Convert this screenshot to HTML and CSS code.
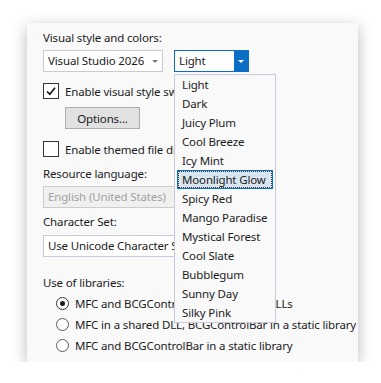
FILE: index.html
```html
<!DOCTYPE html>
<html lang="en">
<head>
  <meta charset="UTF-8">
  <title>Project Wizard - Appearance</title>
  <link rel="stylesheet" href="styles.css">
</head>

<body>
  <div class="window">

    <!-- Visual style -->
    <div class="label">Visual style and colors:</div>
    <div class="combo-row">
      <div class="combo combo-style">
        <span>Visual Studio 2026</span>
        <span class="arrow"></span>
      </div>
      <div class="combo-wrap">
        <div class="combo combo-theme">
          <span>Light</span>
          <span class="drop-btn"><span class="arrow arrow-white"></span></span>
        </div>
        <ul class="dropdown">
          <li>Light</li>
          <li>Dark</li>
          <li>Juicy Plum</li>
          <li>Cool Breeze</li>
          <li>Icy Mint</li>
          <li class="selected">Moonlight Glow</li>
          <li>Spicy Red</li>
          <li>Mango Paradise</li>
          <li>Mystical Forest</li>
          <li>Cool Slate</li>
          <li>Bubblegum</li>
          <li>Sunny Day</li>
          <li>Silky Pink</li>
        </ul>
      </div>
    </div>

    <div class="check-row first-check">
      <span class="checkbox checked">
        <svg width="12" height="12" viewBox="0 0 12 12"><path d="M2 6.5 L4.8 9.2 L10 2.8" fill="none" stroke="#111" stroke-width="1.6"/></svg>
      </span>
      <span>Enable visual style switching</span>
    </div>
    <button class="btn-options">Options...</button>

    <div class="check-row second-check">
      <span class="checkbox"></span>
      <span>Enable themed file dialogs</span>
    </div>

    <!-- Resources -->
    <div class="label label-resource">Resource language:</div>
    <div class="combo combo-wide disabled">English (United States)</div>

    <div class="label label-charset">Character Set:</div>
    <div class="combo combo-wide combo-charset">Use Unicode Character Set</div>

    <!-- Libraries -->
    <div class="label label-libs">Use of libraries:</div>
    <div class="radio-list">
      <div class="radio-row"><span class="radio on"></span><span>MFC and BCGControlBar in a shared DLLs</span></div>
      <div class="radio-row"><span class="radio"></span><span>MFC in a shared DLL, BCGControlBar in a static library</span></div>
      <div class="radio-row"><span class="radio"></span><span>MFC and BCGControlBar in a static library</span></div>
    </div>

  </div>
</body>
</html>
```

FILE: styles.css
```css
body {
  margin: 0;
  background: #ffffff;
  font-family: "Noto Sans", "Open Sans", sans-serif;
  font-size: 11.5px;
  letter-spacing: -0.15px;
  color: #1b1b1b;
}

.window {
  margin: 23px 0 0 27px;
  width: 331px;
  height: 339px;
  box-sizing: border-box;
  padding: 7px 0 0 16px;
  background: #f9f9f9;
  box-shadow: 0 4px 14px rgba(0, 0, 0, 0.28);
  overflow: hidden;
  white-space: nowrap;
}

.label {
  height: 16px;
  line-height: 16px;
}

/* Combo boxes */
.combo-row {
  display: flex;
  gap: 11px;
  margin-top: 4px;
}

.combo {
  display: flex;
  align-items: center;
  justify-content: space-between;
  box-sizing: border-box;
  height: 22px;
  padding-left: 4px;
  background: #ffffff;
  border: 1px solid #c9c9d9;
  line-height: 20px;
}

.combo-style {
  width: 120px;
  padding-right: 4px;
}

.arrow {
  flex-shrink: 0;
  width: 0;
  height: 0;
  border-left: 3px solid transparent;
  border-right: 3px solid transparent;
  border-top: 3px solid #7a7a7a;
}
.arrow-white {
  border-top-color: #ffffff;
}

.combo-wrap {
  position: relative;
}

.combo-theme {
  width: 75px;
  padding-right: 0;
  border-color: #0a6fc4;
}

.drop-btn {
  display: flex;
  align-items: center;
  justify-content: center;
  width: 14px;
  height: 20px;
  background: #0a6fc4;
}

/* Drop down list */
.dropdown {
  position: absolute;
  top: 24px;
  left: 0;
  z-index: 10;
  width: 102px;
  box-sizing: border-box;
  margin: 0;
  padding: 0;
  list-style: none;
  background: #f9f9f9;
  border: 1px solid #c9c9d9;
}
.dropdown li {
  height: 19px;
  line-height: 17px;
  margin: 0 2px;
  padding-left: 4px;
  box-sizing: border-box;
  border: 1px solid transparent;
}
.dropdown li.selected {
  background: #d9e5f1;
  border-color: #0a72c8;
  outline: 1px dotted #333;
  outline-offset: -2px;
}

/* Checkboxes */
.check-row {
  display: flex;
  align-items: center;
  gap: 6px;
  height: 16px;
}
.first-check {
  margin-top: 11px;
}
.second-check {
  margin-top: 12px;
}

.checkbox {
  flex-shrink: 0;
  display: flex;
  align-items: center;
  justify-content: center;
  width: 16px;
  height: 16px;
  box-sizing: border-box;
  background: #ffffff;
  border: 1px solid #333333;
}

.btn-options {
  display: block;
  margin: 8px 0 0 22px;
  width: 75px;
  height: 22px;
  padding: 0;
  font-family: inherit;
  font-size: inherit;
  letter-spacing: inherit;
  color: #1b1b1b;
  background: #e1e1e1;
  border: 1px solid #adadad;
}

.label-resource {
  margin-top: 9px;
}

.combo-wide {
  width: 200px;
  margin-top: 4px;
}
.combo.disabled {
  background: #f0f0f0;
  border-color: #cccccc;
  color: #a2a2a2;
}

.label-charset {
  margin-top: 6px;
}
.combo-charset {
  margin-top: 5px;
}

.label-libs {
  margin-top: 18px;
}

/* Radios */
.radio-list {
  margin-top: 2px;
  padding-left: 13px;
}
.radio-row {
  display: flex;
  align-items: center;
  gap: 6px;
  height: 21px;
}
.radio {
  flex-shrink: 0;
  display: flex;
  align-items: center;
  justify-content: center;
  width: 13px;
  height: 13px;
  box-sizing: border-box;
  border: 1px solid #5a5a5a;
  border-radius: 50%;
  background: #ffffff;
}
.radio.on {
  border-color: #333333;
}
.radio.on::after {
  content: "";
  width: 5px;
  height: 5px;
  border-radius: 50%;
  background: #1b1b1b;
}
```
